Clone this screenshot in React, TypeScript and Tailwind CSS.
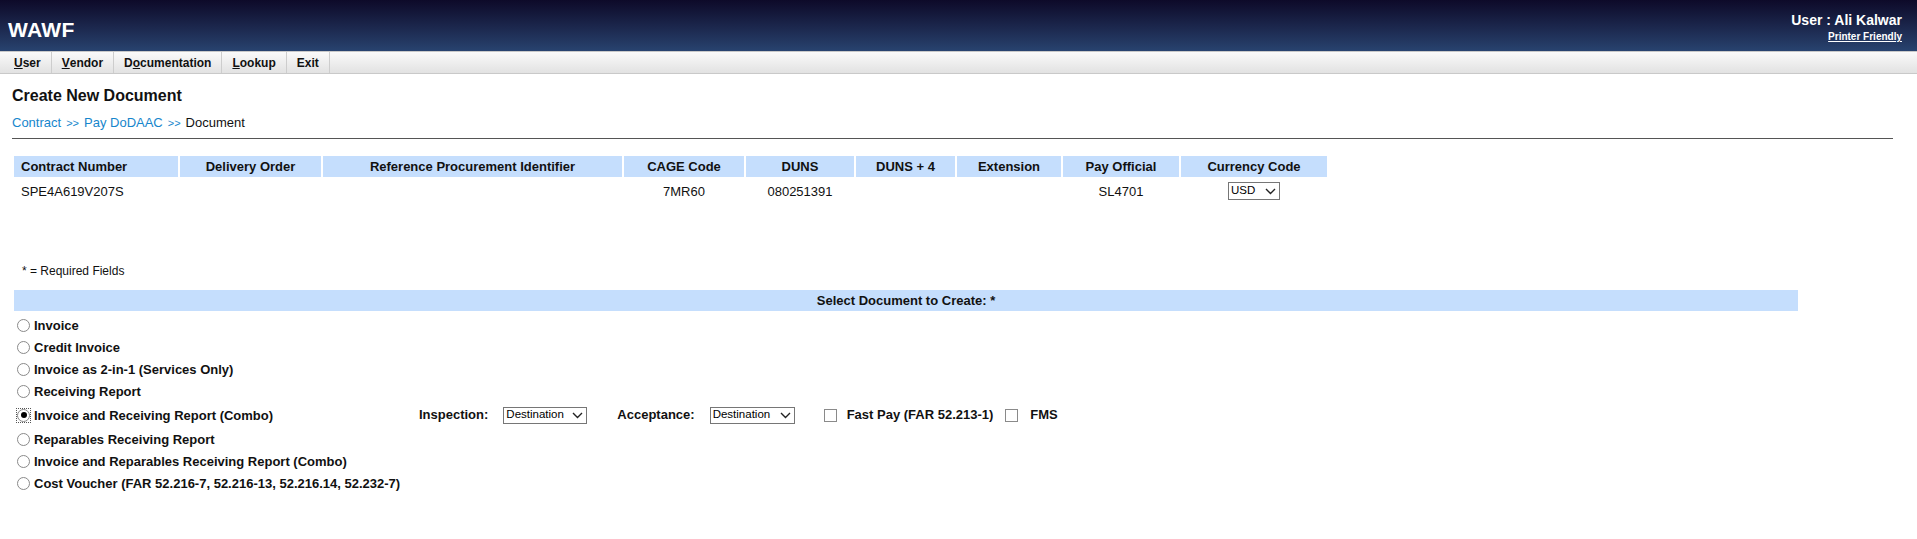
import React from "react";

const font = { fontFamily: '"Liberation Sans", Arial, Helvetica, sans-serif' };

const menu = [
  { pre: "", u: "U", post: "ser" },
  { pre: "", u: "V", post: "endor" },
  { pre: "D", u: "o", post: "cumentation" },
  { pre: "", u: "L", post: "ookup" },
  { pre: "Exit", u: "", post: "" },
];

const columns = [
  { label: "Contract Number", w: "w-[164px]", left: true },
  { label: "Delivery Order", w: "w-[141px]" },
  { label: "Reference Procurement Identifier", w: "w-[299px]" },
  { label: "CAGE Code", w: "w-[120px]" },
  { label: "DUNS", w: "w-[108px]" },
  { label: "DUNS + 4", w: "w-[99px]" },
  { label: "Extension", w: "w-[104px]" },
  { label: "Pay Official", w: "w-[116px]" },
  { label: "Currency Code", w: "w-[146px]" },
];

const docs = [
  "Invoice",
  "Credit Invoice",
  "Invoice as 2-in-1 (Services Only)",
  "Receiving Report",
  "Invoice and Receiving Report (Combo)",
  "Reparables Receiving Report",
  "Invoice and Reparables Receiving Report (Combo)",
  "Cost Voucher (FAR 52.216-7, 52.216-13, 52.216.14, 52.232-7)",
];

function Chevron() {
  return (
    <svg width="11" height="7" viewBox="0 0 11 7" className="shrink-0">
      <path d="M1 1 L5.5 5.5 L10 1" fill="none" stroke="#222" strokeWidth="1.4" />
    </svg>
  );
}

function FakeSelect({ value, w }: { value: string; w: string }) {
  return (
    <div
      className={`flex h-[17px] ${w} items-center justify-between border border-[#767676] bg-white pl-[2px] pr-[3px] text-[11.5px] font-normal leading-none text-black`}
    >
      <span>{value}</span>
      <Chevron />
    </div>
  );
}

function Radio({ checked }: { checked?: boolean }) {
  if (checked) {
    return (
      <span className="ml-[4px] mr-[3px] flex h-[15px] w-[15px] shrink-0 items-center justify-center border border-dotted border-[#555]">
        <span className="flex h-[13px] w-[13px] items-center justify-center rounded-full border border-[#8a8a8a] bg-white">
          <span className="h-[6px] w-[6px] rounded-full bg-black" />
        </span>
      </span>
    );
  }
  return <span className="ml-[5px] mr-[4px] block h-[13px] w-[13px] shrink-0 rounded-full border border-[#8a8a8a] bg-white" />;
}

function Checkbox() {
  return <span className="block h-[13px] w-[13px] shrink-0 border border-[#8a8a8a] bg-white" />;
}

export default function App() {
  return (
    <div className="min-h-[539px] w-full bg-white text-[#111]" style={font}>
      {/* header */}
      <div className="flex h-[51px] items-start justify-between bg-gradient-to-b from-[#0d0a29] to-[#28436f] px-[8px]">
        <div className="mt-[18px] text-[21px] font-bold leading-[24px] tracking-[0.3px] text-white">WAWF</div>
        <div className="mr-[7px] mt-[12px] flex flex-col items-end">
          <div className="text-[14px] font-bold leading-[17px] text-white">User : Ali Kalwar</div>
          <a className="mt-[2px] text-[10px] font-bold leading-[12px] text-white underline">Printer Friendly</a>
        </div>
      </div>

      {/* menu */}
      <div className="flex h-[23px] items-stretch border-t border-b border-[#c9c9c9] bg-gradient-to-b from-[#fafafa] to-[#e2e2e2] pl-[4px]">
        {menu.map((m, i) => (
          <div
            key={i}
            className="flex items-center border-r border-[#cdcdcd] px-[10px] text-[12px] font-bold text-[#111]"
          >
            {m.pre}
            {m.u && <span className="underline">{m.u}</span>}
            {m.post}
          </div>
        ))}
      </div>

      <div className="px-[12px]">
        <h1 className="mt-[12px] text-[16px] font-bold leading-[20px]">Create New Document</h1>
        <div className="mt-[8px] flex items-baseline text-[13px] leading-[17px]">
          <span className="text-[#1686cc]">Contract</span>
          <span className="mx-[5px] text-[11px] text-[#1686cc]">&gt;&gt;</span>
          <span className="text-[#1686cc]">Pay DoDAAC</span>
          <span className="mx-[5px] text-[11px] text-[#1686cc]">&gt;&gt;</span>
          <span>Document</span>
        </div>
        <div className="mt-[6px] h-px w-[1881px] bg-[#555]" />

        {/* contract table */}
        <table className="mt-[15px] table-fixed border-separate border-spacing-[2px]">
          <thead>
            <tr>
              {columns.map((c) => (
                <th
                  key={c.label}
                  className={`${c.w} h-[21px] bg-[#c5defd] px-[7px] text-[13px] font-bold leading-[15px] ${
                    c.left ? "text-left" : "text-center"
                  }`}
                >
                  {c.label}
                </th>
              ))}
            </tr>
          </thead>
          <tbody>
            <tr className="text-[13px] leading-[15px]">
              <td className="h-[24px] px-[7px] text-left">SPE4A619V207S</td>
              <td />
              <td />
              <td className="text-center">7MR60</td>
              <td className="text-center">080251391</td>
              <td />
              <td />
              <td className="text-center">SL4701</td>
              <td>
                <div className="flex justify-center">
                  <FakeSelect value="USD" w="w-[52px] h-[18px]" />
                </div>
              </td>
            </tr>
          </tbody>
        </table>

        <div className="ml-[10px] mt-[59px] text-[12px] leading-[14px]">* = Required Fields</div>

        {/* document selection */}
        <div className="ml-[2px] mt-[12px] flex h-[21px] w-[1784px] items-center justify-center bg-[#c5defd] text-[13px] font-bold">
          Select Document to Create: *
        </div>
        <div className="mt-[3px] flex flex-col">
          {docs.map((d, i) => {
            const combo = i === 4;
            return (
              <div key={d} className={`flex items-center ${combo ? "h-[26px]" : "h-[22px]"}`}>
                <div className="flex w-[407px] shrink-0 items-center">
                  <Radio checked={combo} />
                  <span className="text-[13px] font-bold leading-[15px]">{d}</span>
                </div>
                {combo && (
                  <div className="flex items-center text-[13px] font-bold">
                    <span>Inspection:</span>
                    <div className="ml-[15px]">
                      <FakeSelect value="Destination" w="w-[84px]" />
                    </div>
                    <span className="ml-[30px]">Acceptance:</span>
                    <div className="ml-[15px]">
                      <FakeSelect value="Destination" w="w-[85px]" />
                    </div>
                    <div className="ml-[29px]">
                      <Checkbox />
                    </div>
                    <span className="ml-[10px]">Fast Pay (FAR 52.213-1)</span>
                    <div className="ml-[12px]">
                      <Checkbox />
                    </div>
                    <span className="ml-[12px]">FMS</span>
                  </div>
                )}
              </div>
            );
          })}
        </div>
      </div>
    </div>
  );
}
